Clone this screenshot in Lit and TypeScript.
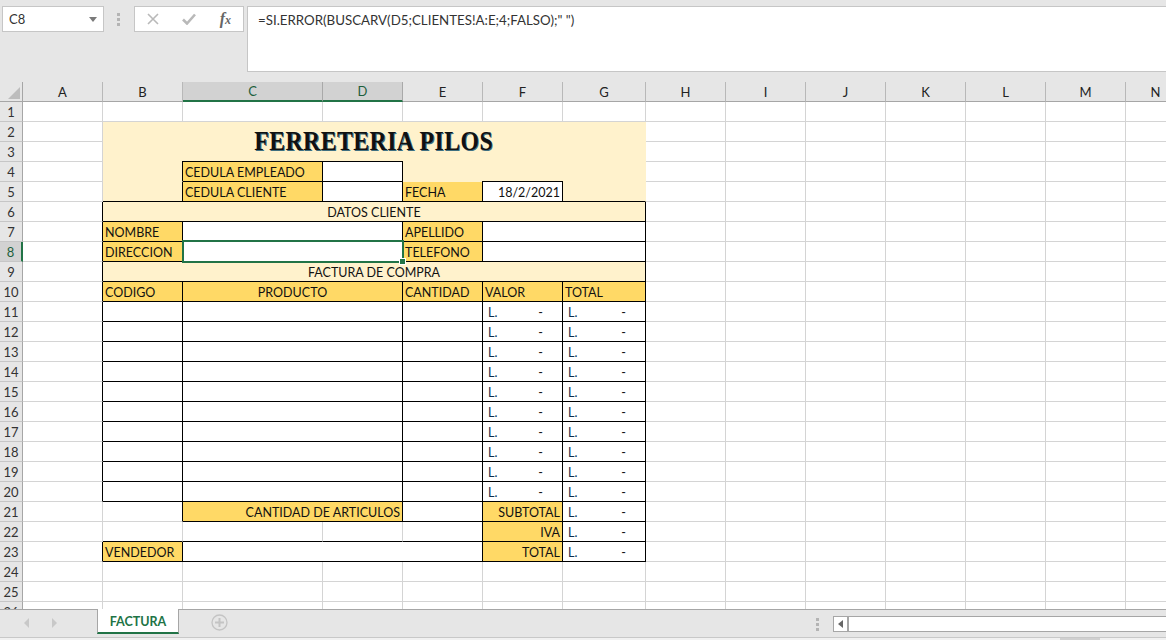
import { LitElement, css, html, nothing } from "lit";
import { customElement } from "lit/decorators.js";

const COLS = ["A", "B", "C", "D", "E", "F", "G", "H", "I", "J", "K", "L", "M", "N"];
const ROW_COUNT = 26;
const SELECTED_COLS = ["C", "D"];
const SELECTED_ROW = 8;

interface Cell {
  text?: string;
  cls?: string; // fill, border and alignment classes
  cols?: number;
  rows?: number;
  money?: boolean;
  selected?: boolean;
}

function buildSheet() {
  const cells = new Map<string, Cell>();
  const skip = new Set<string>();
  const put = (ref: string, cell: Cell) => {
    cells.set(ref, cell);
    const c = COLS.indexOf(ref[0]);
    const r = parseInt(ref.slice(1));
    for (let y = 0; y < (cell.rows ?? 1); y++) {
      for (let x = 0; x < (cell.cols ?? 1); x++) {
        if (x || y) skip.add(COLS[c + x] + (r + y));
      }
    }
  };

  put("B2", { text: "FERRETERIA PILOS", cls: "light title", cols: 6, rows: 2 });

  put("B4", { cls: "light kr" });
  put("C4", { text: "CEDULA EMPLEADO", cls: "gold kr kb kt" });
  put("D4", { cls: "kr kb kt" });
  put("E4", { cls: "light", cols: 3 });

  put("B5", { cls: "light kr kb" });
  put("C5", { text: "CEDULA CLIENTE", cls: "gold kr kb" });
  put("D5", { cls: "kr kb" });
  put("E5", { text: "FECHA", cls: "gold kr kb" });
  put("F5", { text: "18/2/2021", cls: "right kr kb kt" });
  put("G5", { cls: "light kb" });

  put("B6", { text: "DATOS CLIENTE", cls: "light center kr kb", cols: 6 });

  put("B7", { text: "NOMBRE", cls: "gold kr kb" });
  put("C7", { cls: "kr kb", cols: 2 });
  put("E7", { text: "APELLIDO", cls: "gold kr kb" });
  put("F7", { cls: "kr kb", cols: 2 });

  put("B8", { text: "DIRECCION", cls: "gold kr kb" });
  put("C8", { cls: "kr kb", cols: 2, selected: true });
  put("E8", { text: "TELEFONO", cls: "gold kr kb" });
  put("F8", { cls: "kr kb", cols: 2 });

  put("B9", { text: "FACTURA DE COMPRA", cls: "light center kr kb", cols: 6 });

  put("B10", { text: "CODIGO", cls: "gold kr kb" });
  put("C10", { text: "PRODUCTO", cls: "gold center kr kb", cols: 2 });
  put("E10", { text: "CANTIDAD", cls: "gold kr kb" });
  put("F10", { text: "VALOR", cls: "gold kr kb" });
  put("G10", { text: "TOTAL", cls: "gold kr kb" });

  for (let r = 11; r <= 20; r++) {
    put("B" + r, { cls: "kr kb" });
    put("C" + r, { cls: "kr kb", cols: 2 });
    put("E" + r, { cls: "kr kb" });
    put("F" + r, { cls: "kr kb", money: true });
    put("G" + r, { cls: "kr kb", money: true });
  }

  put("B21", { cls: "kr" });
  put("C21", { text: "CANTIDAD DE ARTICULOS", cls: "gold right kr kb", cols: 2 });
  put("E21", { cls: "kr kb" });
  put("F21", { text: "SUBTOTAL", cls: "gold right kr kb" });
  put("G21", { cls: "kr kb", money: true });

  put("B22", { cls: "kb" });
  put("C22", { cls: "kb" });
  put("D22", { cls: "kb" });
  put("E22", { cls: "kr kb" });
  put("F22", { text: "IVA", cls: "gold right kr kb" });
  put("G22", { cls: "kr kb", money: true });

  put("B23", { text: "VENDEDOR", cls: "gold kr kb" });
  put("C23", { cls: "kr kb", cols: 3 });
  put("F23", { text: "TOTAL", cls: "gold right kr kb" });
  put("G23", { cls: "kr kb", money: true });

  // left edge of the form is the right border of column A
  for (let r = 6; r <= 20; r++) put("A" + r, { cls: "kr" });
  put("A23", { cls: "kr" });

  return { cells, skip };
}

const sheet = buildSheet();

@customElement("app-root")
export class AppRoot extends LitElement {
  private renderCell(col: string, row: number) {
    const ref = col + row;
    if (sheet.skip.has(ref)) return nothing;
    const cell = sheet.cells.get(ref) ?? {};
    const span =
      cell.cols || cell.rows
        ? `grid-column: span ${cell.cols ?? 1}; grid-row: span ${cell.rows ?? 1}`
        : nothing;
    return html`<div class="cell ${cell.cls ?? ""}" style=${span}>
      ${cell.money
        ? html`<span class="lempira">L.</span><span class="dash">-</span>`
        : cell.text
          ? html`<span class="txt">${cell.text}</span>`
          : nothing}
      ${cell.selected ? html`<div class="selection"><i></i></div>` : nothing}
    </div>`;
  }

  private renderGrid() {
    const rows = Array.from({ length: ROW_COUNT }, (_, i) => i + 1);
    return html`
      <div class="grid">
        <div class="corner">
          <svg width="12" height="12" viewBox="0 0 12 12">
            <path d="M12 0V12H0Z" fill="#bdbdbd" />
          </svg>
        </div>
        ${COLS.map(
          (c) =>
            html`<div class="col-head ${SELECTED_COLS.includes(c) ? "on" : ""}">
              ${c}
            </div>`,
        )}
        ${rows.map(
          (r) => html`
            <div class="row-head ${r === SELECTED_ROW ? "on" : ""}">${r}</div>
            ${COLS.map((c) => this.renderCell(c, r))}
          `,
        )}
      </div>
    `;
  }

  protected override render() {
    return html`
      <div class="formula-area">
        <div class="name-box">
          <span>C8</span>
          <svg width="8" height="5" viewBox="0 0 8 5">
            <path d="M0 0H8L4 5Z" fill="#7a7a7a" />
          </svg>
        </div>
        <div class="dots"><b></b><b></b><b></b></div>
        <div class="fx-box">
          <svg width="12" height="12" viewBox="0 0 12 12">
            <path
              d="M1 1L11 11M11 1L1 11"
              stroke="#b9b9b9"
              stroke-width="1.6"
              fill="none"
            />
          </svg>
          <svg width="14" height="12" viewBox="0 0 14 12">
            <path
              d="M1 6.5L5 10.5L13 1.5"
              stroke="#b9b9b9"
              stroke-width="2.6"
              fill="none"
            />
          </svg>
          <span class="fx">f<small>x</small></span>
        </div>
        <div class="formula">=SI.ERROR(BUSCARV(D5;CLIENTES!A:E;4;FALSO);" ")</div>
      </div>
      <div class="sheet">${this.renderGrid()}</div>
      <div class="tabs">
        <svg class="nav" width="6" height="10" viewBox="0 0 6 10">
          <path d="M5 0V10L0 5Z" fill="#c8c8c8" />
        </svg>
        <svg class="nav next" width="6" height="10" viewBox="0 0 6 10">
          <path d="M0 0V10L5 5Z" fill="#c8c8c8" />
        </svg>
        <div class="tab">FACTURA</div>
        <svg class="plus" width="17" height="17" viewBox="0 0 17 17">
          <circle cx="8.5" cy="8.5" r="7.5" fill="none" stroke="#c4c4c4" stroke-width="1.3" />
          <path d="M8.5 4V13M4 8.5H13" stroke="#c4c4c4" stroke-width="2" />
        </svg>
        <div class="dots tab-dots"><b></b><b></b><b></b></div>
        <div class="scroll">
          <div class="scroll-btn">
            <svg width="5" height="8" viewBox="0 0 5 8">
              <path d="M5 0V8L0 4Z" fill="#666" />
            </svg>
          </div>
        </div>
      </div>
      <div class="status"><div class="status-thumb"></div></div>
    `;
  }

  static override styles = css`
    :host {
      display: flex;
      flex-direction: column;
      width: 1166px;
      height: 640px;
      overflow: hidden;
      background: #fff;
      font-family: Lato, "Liberation Sans", sans-serif;
      font-size: 12.5px;
      color: #111;
    }

    /* formula bar */
    .formula-area {
      height: 82px;
      flex: none;
      display: flex;
      align-items: flex-start;
      background: #e6e6e6;
      padding: 6px 0 0 2px;
      box-sizing: border-box;
    }
    .name-box {
      width: 102px;
      height: 26px;
      box-sizing: border-box;
      background: #fff;
      border: 1px solid #c6c6c6;
      display: flex;
      align-items: center;
      justify-content: space-between;
      padding: 0 6px 0 6px;
      font-size: 13px;
      color: #333;
    }
    .dots {
      display: flex;
      flex-direction: column;
      gap: 2px;
      width: 3px;
    }
    .dots b {
      width: 3px;
      height: 3px;
      background: #b4b4b4;
    }
    .formula-area .dots {
      margin: 7px 14px 0 13px;
    }
    .fx-box {
      width: 110px;
      height: 26px;
      box-sizing: border-box;
      background: #fff;
      border: 1px solid #c6c6c6;
      display: flex;
      align-items: center;
      justify-content: space-between;
      padding: 0 12px 0 12px;
    }
    .fx {
      font-family: "Liberation Serif", serif;
      font-style: italic;
      font-weight: 700;
      font-size: 16px;
      color: #666;
    }
    .fx small {
      font-size: 12px;
    }
    .formula {
      flex: 1;
      margin-left: 3px;
      height: 66px;
      box-sizing: border-box;
      background: #fff;
      border: 1px solid #c6c6c6;
      border-right: 0;
      padding: 4px 0 0 10px;
      font-size: 13.3px;
      line-height: 18px;
      color: #333;
    }

    /* sheet grid */
    .sheet {
      flex: 1;
      min-height: 0;
      overflow: hidden;
    }
    .grid {
      display: grid;
      grid-template-columns: 23px 80px 80px 140px 80px 80px 80px 83px 80px 80px 80px 80px 80px 80px 60px;
      grid-auto-rows: 20px;
    }
    .corner {
      background: #e6e6e6;
      border-right: 1px solid #a6a6a6;
      border-bottom: 1px solid #a6a6a6;
      box-sizing: border-box;
      padding: 5px 0 0 8px;
    }
    .col-head {
      background: #e6e6e6;
      box-sizing: border-box;
      border-right: 1px solid #b8b8b8;
      border-bottom: 1px solid #a6a6a6;
      display: flex;
      align-items: center;
      justify-content: center;
      font-size: 13px;
      color: #222;
    }
    .col-head.on {
      background: #d2d2d2;
      color: #1d5f3c;
      border-bottom: 2px solid #217346;
      border-right-color: #a9a9a9;
    }
    .row-head {
      background: #e6e6e6;
      box-sizing: border-box;
      border-right: 1px solid #a6a6a6;
      border-bottom: 1px solid #c6c6c6;
      display: flex;
      align-items: center;
      justify-content: center;
      padding-top: 1px;
      font-size: 13px;
      color: #333;
    }
    .row-head.on {
      background: #d2d2d2;
      color: #1d5f3c;
      border-right: 2px solid #217346;
    }
    .cell {
      position: relative;
      box-sizing: border-box;
      border-right: 1px solid #d4d4d4;
      border-bottom: 1px solid #d4d4d4;
      display: flex;
      align-items: center;
      justify-content: space-between;
      padding: 2px 2px 0;
      min-width: 0;
      white-space: nowrap;
    }
    .light {
      background: #fff2cc;
      border-color: #fff2cc;
    }
    .gold {
      background: #ffd966;
      border-color: #ffd966;
    }
    .center {
      justify-content: center;
    }
    .right {
      justify-content: flex-end;
    }
    .cell.kr {
      border-right-color: #000;
    }
    .cell.kb {
      border-bottom-color: #000;
    }
    .kt::before {
      content: "";
      position: absolute;
      left: -1px;
      right: -1px;
      top: -1px;
      height: 1px;
      background: #000;
    }
    .lempira {
      padding-left: 3px;
      color: #0d2f4f;
    }
    .dash {
      padding-right: 17px;
    }
    .title {
      justify-content: center;
      padding: 0 2px 1px;
    }
    .title .txt {
      display: inline-block;
      font-family: "Liberation Serif", serif;
      font-weight: 700;
      font-size: 27px;
      letter-spacing: 0.5px;
      transform: scaleX(0.88);
      color: #111;
      text-shadow: 1px 1px 0 #3f6f80;
    }
    .selection {
      position: absolute;
      left: -1px;
      top: -2px;
      width: 222px;
      height: 23px;
      box-sizing: border-box;
      border: 2px solid #217346;
      z-index: 2;
    }
    .selection i {
      position: absolute;
      right: -4px;
      bottom: -4px;
      width: 7px;
      height: 7px;
      box-sizing: border-box;
      background: #217346;
      border: 1px solid #fff;
    }

    /* sheet tabs */
    .tabs {
      height: 28px;
      flex: none;
      position: relative;
      z-index: 3;
      box-sizing: border-box;
      background: #e6e6e6;
      border-top: 1px solid #a6a6a6;
      display: flex;
      align-items: flex-start;
    }
    .nav {
      margin: 8px 0 0 24px;
      flex: none;
    }
    .nav.next {
      margin-left: 22px;
    }
    .tab {
      margin: -1px 0 0 39px;
      width: 82px;
      height: 25px;
      box-sizing: border-box;
      background: #fff;
      border: 1px solid #a6a6a6;
      border-top: 0;
      border-bottom: 2px solid #217346;
      text-align: center;
      font-weight: 700;
      font-size: 12.5px;
      line-height: 26px;
      color: #217346;
    }
    .plus {
      margin: 4px 0 0 32px;
      flex: none;
    }
    .tab-dots {
      margin: 8px 0 0 588px;
      flex: none;
    }
    .scroll {
      margin: 6px 0 0 14px;
      flex: 1;
      height: 16px;
      box-sizing: border-box;
      background: #fff;
      border: 1px solid #a6a6a6;
      border-width: 1px 0 1px 1px;
    }
    .scroll-btn {
      width: 15px;
      height: 14px;
      box-sizing: border-box;
      border-right: 2px solid #a6a6a6;
      display: flex;
      align-items: center;
      justify-content: center;
      background: #fff;
    }

    /* status strip, cut off by the window */
    .status {
      height: 3px;
      flex: none;
      background: #f1f1f1;
      border-top: 1px solid #c8c8c8;
      box-sizing: border-box;
      position: relative;
    }
    .status-thumb {
      position: absolute;
      left: 1060px;
      top: 0;
      width: 40px;
      height: 2px;
      background: #d0d0d0;
    }
  `;
}

declare global {
  interface HTMLElementTagNameMap {
    "app-root": AppRoot;
  }
}
